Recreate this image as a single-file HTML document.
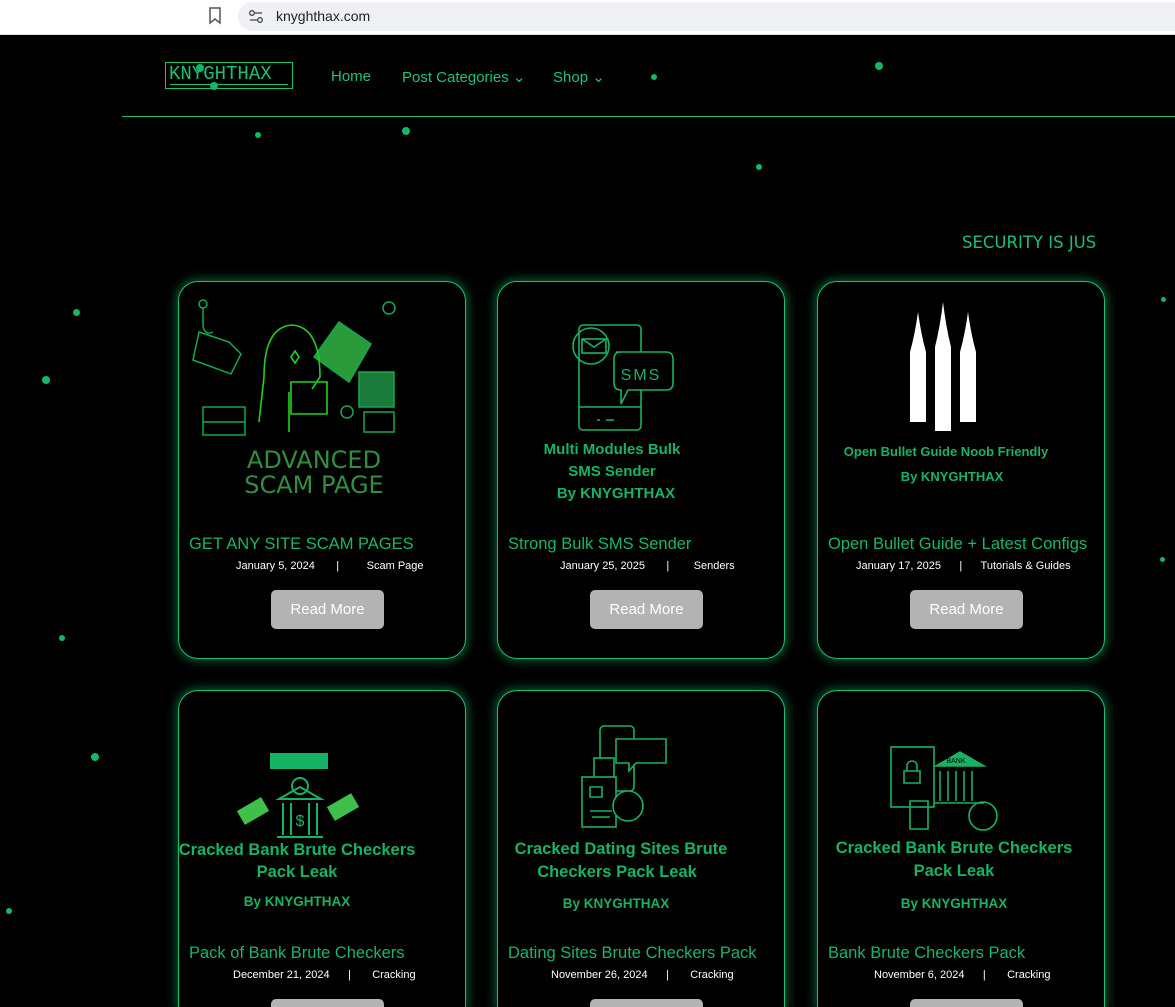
<!DOCTYPE html>
<html><head><meta charset="utf-8"><style>
*{margin:0;padding:0;box-sizing:border-box}
html,body{width:1175px;height:1007px;overflow:hidden}
body{background:#000;font-family:"Liberation Sans",sans-serif;position:relative}
.bar{position:absolute;left:0;top:0;width:1175px;height:35px;background:#fff;border-bottom:1px solid #ddd}
.url{position:absolute;left:238px;top:2px;width:937px;height:29px;background:#eef0f4;border-radius:15px 0 0 15px}
.url span{position:absolute;left:38px;top:6px;font-size:14px;color:#222}
.a{position:absolute}
.nav{position:absolute;top:68px;font-size:15px;color:#1ec27a}
.hr{position:absolute;left:122px;top:116px;width:1053px;height:1px;background:#19b96c}
.dot{position:absolute;border-radius:50%;background:#12b865}
.card{position:absolute;width:288px;height:378px;border:1px solid #1bbf72;border-radius:20px;box-shadow:0 0 10px 2px rgba(25,200,110,.45);background:#000;overflow:hidden}
.card.r2{height:317px;border-bottom:none;border-radius:20px 20px 0 0}
.t{position:absolute;left:10px;top:253px;font-size:16.5px;color:#18b56a;white-space:nowrap}
.m{position:absolute;top:278px;font-size:11px;color:#fff;white-space:nowrap}
.btn{position:absolute;left:92px;top:308px;width:113px;height:39px;background:#b3b3b3;border-radius:5px;color:#fff;font-size:15px;text-align:center;line-height:39px}
.im{position:absolute;left:0;top:0}
.g{font-family:"Liberation Sans",sans-serif;font-weight:bold;fill:#17b364}
</style></head><body>
<div class="bar"><svg class="a" style="left:208px;top:7px" width="14" height="18"><path d="M2 1h10v15l-5-4-5 4z" fill="none" stroke="#555" stroke-width="1.5"/></svg>
<div class="url"><svg class="a" style="left:10px;top:7px" width="16" height="16"><circle cx="4" cy="4" r="2.3" fill="none" stroke="#444" stroke-width="1.3"/><path d="M7 4h7M2 11h7" stroke="#444" stroke-width="1.3"/><circle cx="12" cy="11" r="2.3" fill="none" stroke="#444" stroke-width="1.3"/></svg><span>knyghthax.com</span></div></div>

<div class="a" style="left:165px;top:62px;width:128px;height:27px;border:1px solid #1bbf72;color:#1bbf72;font-family:'Liberation Mono',monospace;font-size:19px;line-height:22px;padding:0 0 0 3px;letter-spacing:0">KNYGHTHAX</div>
<div class="a" style="left:170px;top:84px;width:118px;height:1px;background:#1bbf72"></div>
<div class="dot" style="left:196px;top:64px;width:8px;height:8px"></div>
<div class="dot" style="left:210px;top:82px;width:8px;height:8px"></div>
<div class="nav" style="left:331px">Home</div>
<div class="nav" style="left:402px">Post Categories &#8964;</div>
<div class="nav" style="left:553px">Shop &#8964;</div>
<div class="hr"></div>
<div class="a" style="left:962px;top:233px;font-size:16.5px;color:#19c07a;font-family:'DejaVu Sans',sans-serif;width:146px;overflow:hidden;white-space:nowrap">SECURITY IS JUS&nbsp;</div>

<div class="dot" style="left:651px;top:74px;width:6px;height:6px"></div>
<div class="dot" style="left:875px;top:62px;width:8px;height:8px"></div>
<div class="dot" style="left:402px;top:127px;width:8px;height:8px"></div>
<div class="dot" style="left:255px;top:132px;width:6px;height:6px"></div>
<div class="dot" style="left:756px;top:164px;width:6px;height:6px"></div>
<div class="dot" style="left:73px;top:309px;width:7px;height:7px"></div>
<div class="dot" style="left:42px;top:376px;width:8px;height:8px"></div>
<div class="dot" style="left:59px;top:635px;width:6px;height:6px"></div>
<div class="dot" style="left:91px;top:753px;width:8px;height:8px"></div>
<div class="dot" style="left:6px;top:908px;width:6px;height:6px"></div>
<div class="dot" style="left:1161px;top:297px;width:5px;height:5px"></div>
<div class="dot" style="left:1160px;top:557px;width:5px;height:5px"></div>

<div class="card" style="left:178px;top:281px">
<svg class="im" width="288" height="230">
<g fill="none" stroke="#15a84f" stroke-width="1.5">
<circle cx="24" cy="22" r="4"/><path d="M24 26v18q2 10 10 6"/><path d="M20 50l30 10 12 12-10 20-38-14z"/>
<path d="M24 125h42v28h-42z"/><path d="M24 140h42"/>
<path d="M160 40l32 22-22 38-35-25z" fill="#2a9a3a"/><circle cx="210" cy="26" r="6"/>
<path d="M180 90h35v35h-35z" fill="#1a7a3a"/><circle cx="168" cy="130" r="6"/><path d="M185 130h30v20h-30z"/>
</g>
<g fill="none" stroke="#22d022" stroke-width="1.6"><path d="M85 95q0-50 28-52 28 2 28 52l-8 12M85 95l-5 45M110 110v40M112 75l4-6 4 6-4 6z"/><path d="M112 100h36v32h-36z"/></g>
<text x="135" y="186" text-anchor="middle" font-size="24" fill="#2f8f3f" font-family="DejaVu Sans">ADVANCED</text>
<text x="135" y="211" text-anchor="middle" font-size="24" fill="#2f8f3f" font-family="DejaVu Sans">SCAM PAGE</text>
</svg>
<div class="t">GET ANY SITE SCAM PAGES</div>
<div class="m" style="left:57px">January 5, 2024 &nbsp;&nbsp;&nbsp;&nbsp;&nbsp;&nbsp;| &nbsp;&nbsp;&nbsp;&nbsp;&nbsp;&nbsp;&nbsp;&nbsp;Scam Page</div>
<div class="btn">Read More</div></div>

<div class="card" style="left:497px;top:281px">
<svg class="im" width="288" height="230">
<g fill="none" stroke="#17b364" stroke-width="1.6"><rect x="81" y="43" width="62" height="105" rx="4"/><path d="M81 125h62M99 138h3M108 138h8"/><circle cx="93" cy="64" r="18"/><rect x="84" y="57" width="24" height="14"/><path d="M84 57l12 8 12-8"/>
<path d="M118 70h50q7 0 7 7v24q0 7-7 7h-38l-7 14v-14q-7 0-7-7v-24q0-7 7-7z" fill="#000"/></g>
<text x="143" y="98" text-anchor="middle" font-size="16" fill="#17b364" font-family="Liberation Sans" letter-spacing="2">SMS</text>
<text x="114" y="172" text-anchor="middle" font-size="15" class="g">Multi Modules Bulk</text>
<text x="114" y="194" text-anchor="middle" font-size="15" class="g">SMS Sender</text>
<text x="118" y="216" text-anchor="middle" font-size="15" class="g">By KNYGHTHAX</text>
</svg>
<div class="t">Strong Bulk SMS Sender</div>
<div class="m" style="left:62px">January 25, 2025 &nbsp;&nbsp;&nbsp;&nbsp;&nbsp;&nbsp;| &nbsp;&nbsp;&nbsp;&nbsp;&nbsp;&nbsp;&nbsp;Senders</div>
<div class="btn">Read More</div></div>

<div class="card" style="left:817px;top:281px">
<svg class="im" width="288" height="230">
<g fill="#fff"><path d="M92 70q5-18 8-40 3 22 8 40v70h-16z"/><path d="M117 65q5-20 8-45 3 25 8 45v84h-16z"/><path d="M142 70q5-18 8-40 3 22 8 40v70h-16z"/></g>
<text x="128" y="174" text-anchor="middle" font-size="13" class="g">Open Bullet Guide Noob Friendly</text>
<text x="134" y="199" text-anchor="middle" font-size="13" class="g">By KNYGHTHAX</text>
</svg>
<div class="t">Open Bullet Guide + Latest Configs</div>
<div class="m" style="left:38px">January 17, 2025 &nbsp;&nbsp;&nbsp;&nbsp;&nbsp;| &nbsp;&nbsp;&nbsp;&nbsp;&nbsp;Tutorials &amp; Guides</div>
<div class="btn">Read More</div></div>

<div class="card r2" style="left:178px;top:690px">
<svg class="im" width="288" height="230">
<g fill="none" stroke="#17b364" stroke-width="2"><rect x="92" y="63" width="56" height="14" fill="#17b364"/><path d="M100 108h42l-21-12zM104 112v32M112 112v32M130 112v32M138 112v32M98 146h46"/><circle cx="121" cy="95" r="8"/></g>
<text x="121" y="135" text-anchor="middle" font-size="16" fill="#17b364" font-family="Liberation Sans">$</text>
<rect x="60" y="112" width="28" height="16" fill="#3ec04a" transform="rotate(-30 74 120)"/><rect x="150" y="108" width="28" height="16" fill="#3ec04a" transform="rotate(-30 164 116)"/>
<text x="118" y="164" text-anchor="middle" font-size="16.5" class="g">Cracked Bank Brute Checkers</text>
<text x="118" y="186" text-anchor="middle" font-size="16.5" class="g">Pack Leak</text>
<text x="118" y="215" text-anchor="middle" font-size="13.5" class="g">By  KNYGHTHAX</text>
</svg>
<div class="t">Pack of Bank Brute Checkers</div>
<div class="m" style="left:54px">December 21, 2024 &nbsp;&nbsp;&nbsp;&nbsp;&nbsp;| &nbsp;&nbsp;&nbsp;&nbsp;&nbsp;&nbsp;Cracking</div>
<div class="btn">Read More</div></div>

<div class="card r2" style="left:497px;top:690px">
<svg class="im" width="288" height="230">
<g fill="none" stroke="#17b364" stroke-width="1.6"><rect x="102" y="35" width="34" height="65" rx="4"/><path d="M118 48h50v24h-30l-7 8v-8h-13z" fill="#000"/><rect x="96" y="67" width="20" height="30" fill="#000"/><rect x="84" y="86" width="34" height="50" fill="#000"/><circle cx="130" cy="115" r="15" fill="#000"/><path d="M92 96h12v10h-12zM92 120h22M94 126h18"/></g>
<text x="123" y="163" text-anchor="middle" font-size="16.5" class="g">Cracked Dating Sites Brute</text>
<text x="119" y="186" text-anchor="middle" font-size="16.5" class="g">Checkers  Pack Leak</text>
<text x="118" y="217" text-anchor="middle" font-size="13.5" class="g">By  KNYGHTHAX</text>
</svg>
<div class="t">Dating Sites Brute Checkers Pack</div>
<div class="m" style="left:53px">November 26, 2024 &nbsp;&nbsp;&nbsp;&nbsp;&nbsp;| &nbsp;&nbsp;&nbsp;&nbsp;&nbsp;&nbsp;Cracking</div>
<div class="btn">Read More</div></div>

<div class="card r2" style="left:817px;top:690px">
<svg class="im" width="288" height="230">
<g fill="none" stroke="#17b364" stroke-width="1.6"><rect x="73" y="56" width="43" height="60"/><path d="M86 80h16v12h-16zM89 80v-5a5 5 0 0 1 10 0v5"/><path d="M118 75l24-14 24 14z" fill="#17b364"/><path d="M122 80v30M130 80v30M138 80v30M146 80v30M154 80v30M116 112h50"/><circle cx="165" cy="125" r="14"/><path d="M92 110h18v28h-18z"/></g>
<text x="138" y="72" text-anchor="middle" font-size="7" fill="#000" font-family="Liberation Sans">BANK</text>
<text x="136" y="162" text-anchor="middle" font-size="16.5" class="g">Cracked Bank Brute Checkers</text>
<text x="136" y="185" text-anchor="middle" font-size="16.5" class="g">Pack Leak</text>
<text x="136" y="217" text-anchor="middle" font-size="13.5" class="g">By  KNYGHTHAX</text>
</svg>
<div class="t">Bank Brute Checkers Pack</div>
<div class="m" style="left:56px">November 6, 2024 &nbsp;&nbsp;&nbsp;&nbsp;&nbsp;| &nbsp;&nbsp;&nbsp;&nbsp;&nbsp;&nbsp;Cracking</div>
<div class="btn">Read More</div></div>
</body></html>
